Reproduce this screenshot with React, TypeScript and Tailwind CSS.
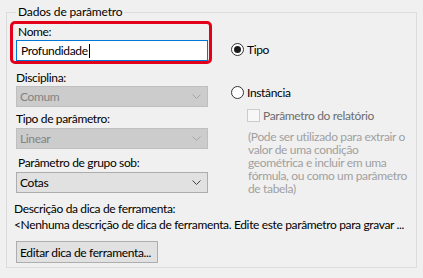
import React from "react";

function Chevron({ muted }: { muted?: boolean }) {
  return (
    <svg width="9" height="5" viewBox="0 0 9 5" className="shrink-0">
      <path d="M0.5 0.5 L4.5 4.5 L8.5 0.5" fill="none" stroke={muted ? "#a6a6a6" : "#404040"} strokeWidth="1" />
    </svg>
  );
}

function Combo({ value, disabled }: { value: string; disabled?: boolean }) {
  return (
    <div
      className={
        disabled
          ? "flex h-[21px] w-[192px] items-center justify-between border border-[#bfbfbf] bg-[#cccccc] pl-[3px] pr-[6px] text-[#838383]"
          : "flex h-[21px] w-[192px] items-center justify-between border border-[#adadad] bg-[#e1e1e1] pl-[3px] pr-[6px] text-black"
      }
    >
      <span>{value}</span>
      <Chevron muted={disabled} />
    </div>
  );
}

function Radio({ label, checked }: { label: string; checked?: boolean }) {
  return (
    <div className="flex items-center gap-[3px]">
      <span className="flex h-[13px] w-[13px] items-center justify-center rounded-full border border-[#333333] bg-white">
        {checked && <span className="h-[7px] w-[7px] rounded-full bg-[#1a1a1a]" />}
      </span>
      <span>{label}</span>
    </div>
  );
}

export default function App() {
  return (
    <main
      className="h-[278px] w-[423px] overflow-hidden bg-[#f0f0f0] px-[6px] pt-[4px] text-[12px] leading-[15px] tracking-[-0.35px] text-black"
      style={{ fontFamily: 'Lato, "Liberation Sans", sans-serif' }}
    >
      <fieldset className="h-[264px] border border-[#dcdcdc] pl-[3px] pr-[3px]">
        <legend className="ml-[6px] px-[2px] leading-[16px] tracking-[-0.15px]">Dados de parâmetro</legend>

        <div className="flex">
          {/* Left column */}
          <div className="flex w-[202px] flex-col">
            <div className="mt-[1px] flex flex-col rounded-[5px] border-[3px] border-[#e3001b] pl-[3px]">
              <span className="pl-[2px]">Nome:</span>
              <div className="mt-[1px] flex h-[21px] w-[192px] items-center border border-[#0078d7] bg-white pl-[4px]">
                <span>Profundidade</span>
                <span className="ml-[1px] h-[14px] w-[1px] bg-black" />
              </div>
            </div>

            <div className="flex flex-col pl-[6px]">
              <span className="mt-[6px]">Disciplina:</span>
              <div className="mt-[1px]">
                <Combo value="Comum" disabled />
              </div>
              <span className="mt-[4px]">Tipo de parâmetro:</span>
              <div className="mt-[2px]">
                <Combo value="Linear" disabled />
              </div>
              <span className="mt-[6px] pl-[2px]">Parâmetro de grupo sob:</span>
              <div className="mt-[2px]">
                <Combo value="Cotas" />
              </div>
            </div>
          </div>

          {/* Right column */}
          <div className="ml-[19px] flex flex-col pt-[22px]">
            <Radio label="Tipo" checked />
            <div className="mt-[28px]">
              <Radio label="Instância" />
            </div>
            <div className="ml-[16px] mt-[8px] flex items-center gap-[3px] text-[#6d6d6d]">
              <span className="h-[13px] w-[13px] border border-[#cccccc] bg-[#f7f7f7]" />
              <span>Parâmetro do relatório</span>
            </div>
            <p className="ml-[17px] mt-[7px] whitespace-nowrap leading-[13px] text-[#a0a0a0]">
              (Pode ser utilizado para extrair o<br />
              valor de uma condição<br />
              geométrica e incluir em uma<br />
              fórmula, ou como um parâmetro<br />
              de tabela)
            </p>
          </div>
        </div>

        <div className="flex flex-col pl-[4px]">
          <span className="mt-[6px]">Descrição da dica de ferramenta:</span>
          <span className="mt-[1px] whitespace-nowrap">
            &lt;Nenhuma descrição de dica de ferramenta. Edite este parâmetro para gravar ...
          </span>
          <button className="ml-[2px] mt-[9px] flex h-[22px] w-[142px] items-center whitespace-nowrap border border-[#adadad] bg-[#e1e1e1] pl-[3px]">
            Editar dica de ferramenta...
          </button>
        </div>
      </fieldset>
    </main>
  );
}
